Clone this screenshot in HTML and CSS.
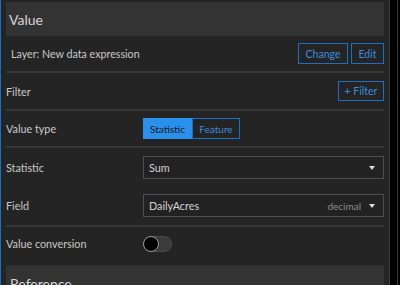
FILE: index.html
```html
<!DOCTYPE html>
<html>
<head>
<meta charset="utf-8">
<link rel="stylesheet" href="styles.css">
</head>
<body>
<div class="frame">
  <div class="edge"></div>
  <div class="panel">
    <div class="block-head">Value</div>
    <div class="row layer-row">
      <span class="layer-text">Layer: New data expression</span>
      <div class="btns">
        <button class="obtn btn-change">Change</button>
        <button class="obtn btn-edit">Edit</button>
      </div>
    </div>
    <div class="row filter-row">
      <span class="label">Filter</span>
      <button class="obtn btn-filter">+ Filter</button>
    </div>
    <div class="row grid-row vtype-row">
      <span class="label">Value type</span>
      <div class="seg">
        <span class="seg-item seg-on">Statistic</span>
        <span class="seg-item seg-off">Feature</span>
      </div>
    </div>
    <div class="row selects">
      <div class="grid-row sel-line">
        <span class="label">Statistic</span>
        <div class="select"><span class="sel-val">Sum</span><span class="caret"></span></div>
      </div>
      <div class="grid-row sel-line">
        <span class="label">Field</span>
        <div class="select"><span class="sel-val">DailyAcres</span><span class="sel-type">decimal</span><span class="caret"></span></div>
      </div>
    </div>
    <div class="grid-row conv-row">
      <span class="label">Value conversion</span>
      <div class="toggle"><span class="knob"></span></div>
    </div>
    <div class="block-head ref-head">Reference</div>
  </div>
  <div class="scroll">
    <div class="sline"></div>
    <div class="sgap"></div>
    <div class="sline"></div>
    <div class="sgap2"></div>
  </div>
</div>
</body>
</html>
```

FILE: styles.css
```css
* { box-sizing: border-box; }
html, body {
  margin: 0;
  padding: 0;
  background: #000;
  width: 400px;
  height: 285px;
  overflow: hidden;
  font-family: Lato, "Noto Sans", sans-serif;
}
.frame {
  display: flex;
  height: 285px;
}
.edge {
  width: 1px;
  background: #1f6cc0;
  flex: none;
}
.panel {
  width: 388px;
  flex: none;
  background: #242424;
  padding: 2px 5px 0 5px;
  overflow: hidden;
}
.scroll {
  display: flex;
  flex: 1;
}
.sline { width: 1px; background: #3c3c3c; }
.sgap { width: 7px; background: #000; }
.sgap2 { flex: 1; background: #000; }

.block-head {
  height: 34px;
  background: #333333;
  color: #d6d6d6;
  font-size: 14px;
  padding-left: 3px;
  display: flex;
  align-items: center;
}
.ref-head {
  margin-top: 5px;
  border-top: 1px solid #2b2b2b;
  padding-top: 10px;
  align-items: flex-start;
  padding-left: 4px;
  line-height: 16px;
}
.row {
  border-bottom: 2px solid #363636;
}
.layer-row {
  height: 37px;
  display: flex;
  align-items: center;
  justify-content: space-between;
  padding-left: 5px;
}
.layer-text {
  color: #c9c9c9;
  font-size: 10.7px;
}
.btns {
  display: flex;
  gap: 3px;
}
.obtn {
  background: transparent;
  border: 1px solid #1d6fc2;
  color: #3a8ddc;
  font-family: inherit;
  font-size: 10.5px;
  height: 21px;
  padding: 0;
  margin: 0;
}
.btn-change { width: 50px; }
.btn-edit { width: 33px; }
.btn-filter { width: 46px; height: 20px; }
.filter-row {
  height: 38px;
  display: flex;
  align-items: center;
  justify-content: space-between;
}
.label {
  color: #c9c9c9;
  font-size: 10.8px;
}
.grid-row {
  display: grid;
  grid-template-columns: 137px 1fr;
  align-items: center;
}
.vtype-row {
  height: 37px;
}
.seg {
  display: flex;
  height: 21px;
}
.seg-item {
  display: flex;
  align-items: center;
  justify-content: center;
  font-size: 10px;
}
.seg-on {
  width: 49px;
  background: #2b90ec;
  color: #101820;
}
.seg-off {
  width: 48px;
  border: 1px solid #1d6fc2;
  color: #3a8ddc;
}
.selects {
  padding: 8px 0;
  display: flex;
  flex-direction: column;
  gap: 15px;
  height: 79px;
}
.select {
  height: 23px;
  border: 1px solid #4e4e4e;
  background: #222222;
  display: flex;
  align-items: center;
  padding-left: 5px;
  padding-right: 8px;
}
.sel-val {
  color: #d2d2d2;
  font-size: 10.8px;
  flex: 1;
}
.sel-type {
  color: #8c8c8c;
  font-size: 10px;
  margin-right: 8px;
}
.caret {
  width: 0;
  height: 0;
  border-left: 3.5px solid transparent;
  border-right: 3.5px solid transparent;
  border-top: 4px solid #dcdcdc;
}
.conv-row {
  height: 33px;
}
.toggle {
  position: relative;
  width: 29px;
  height: 16px;
  border-radius: 8px;
  background: #3b3b3b;
  border: 1px solid #4a4a4a;
}
.knob {
  position: absolute;
  left: -1px;
  top: -1px;
  width: 16px;
  height: 16px;
  border-radius: 50%;
  background: #000;
  border: 1px solid #9a9a9a;
}
```
